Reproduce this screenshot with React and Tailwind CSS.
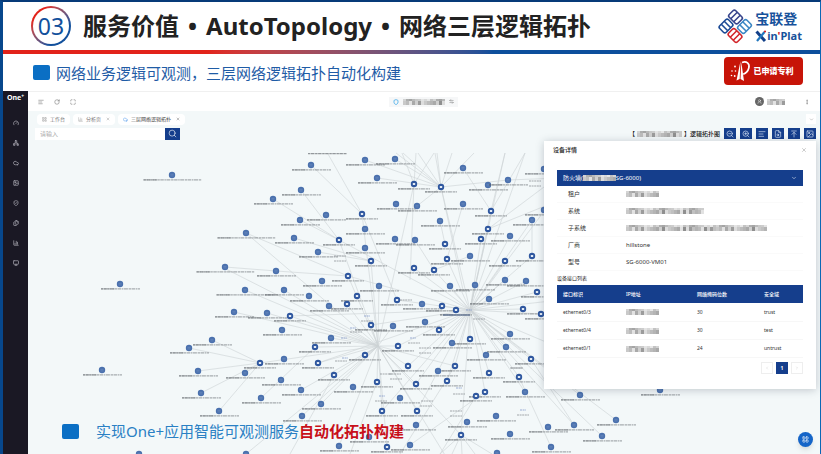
import React from "react";
import {
  AlignLeft, RotateCw, Maximize, Search, ZoomIn, ZoomOut, X, ChevronDown,
  Network, Monitor, ShieldCheck, Files, BarChart3, Gauge,
  LayoutGrid, FileSearch, Image as ImageIcon, ArrowUpToLine, ArrowLeftRight,
  MoreVertical, Shield, UserRound, Cloud, ChevronLeft, ChevronRight,
} from "lucide-react";

const NODES = [
  [311,165],[365,160],[395,159],[377,178],[414,184,1],[441,187,1],[463,168],[488,185],[508,180],[544,169],
  [301,190],[273,199],[396,204],[417,206],[463,204],[491,211,1],[326,215],[362,214,1],[300,220],[440,221],
  [532,220],[544,210],[365,229],[488,229,1],[481,239,1],[510,236],[294,238],[339,240,1],[395,239],[415,240],
  [445,244,1],[318,252],[365,248],[371,261,1],[447,259,1],[470,256],[505,261,1],[532,256,1],[414,268,1],
  [434,270,1],[276,271],[348,276,1],[322,281],[379,286],[450,286],[475,285],[505,280],[526,281],[537,292,1],
  [489,299],[284,290],[309,296],[357,296,1],[329,306],[347,304,1],[397,300,1],[422,304],[442,306,1],[456,310,1],
  [523,309,1],[541,314,1],[290,316,1],[371,325,1],[393,326],[425,322],[439,330,1],[282,330],[331,338],
  [315,347,1],[365,355,1],[398,346,1],[470,339,1],[452,343],[510,334],[506,347],[486,355],[531,359,1],
  [284,359],[318,363,1],[334,375,1],[408,366,1],[455,366,1],[438,371],[489,373,1],[519,377,1],[377,382,1],
  [416,384,1],[447,381,1],[281,380],[353,387],[301,390],[400,398],[485,392,1],[476,396,1],[525,392],
  [321,404],[382,411,1],[417,411,1],[302,416],[496,416],[467,422],[416,425],[461,435,1],[510,434],[548,427],
  [339,446],[387,447,1],[410,445],[497,453],[369,437],[120,284],[245,290],[225,267],[234,312],[267,313],
  [212,340],[189,348],[102,370],[198,371],[245,373],[260,363,1],[201,393],[219,411],[261,398],[139,454],
  [246,454],[172,175],[246,233],[580,395],[660,390],[616,420],[574,425],[602,436],[551,447],
];

const CORE = [470, 310];
const WEST = [378, 346];

const CORE_LINKS = [
  [491,211],[488,229],[481,239],[510,236],[532,220],[532,256],[505,261],[447,259],[434,270],[414,268],[441,187],
  [505,280],[526,281],[537,292],[489,299],[450,286],[475,285],[397,300],[442,306],[523,309],[541,314],[371,325],
  [439,330],[470,339],[510,334],[506,347],[531,359],[408,366],[455,366],[489,373],[519,377],[416,384],[447,381],
  [485,392],[525,392],[580,395],[616,420],[574,425],[602,436],[461,435],[417,411],[382,411],[398,346],[318,363],
  [348,276],[339,240],[525,153],[505,153],[560,190],[560,300],[290,316],[660,390],
];
const WEST_LINKS = [
  [362,214],[339,240],[371,261],[348,276],[347,304],[284,290],[245,290],[267,313],[234,312],
  [290,316],[331,338],[315,347],[365,355],[398,346],[260,363],[318,363],[334,375],[301,390],
  [321,404],[302,416],[339,446],[377,382],[382,411],[387,447],[408,366],[416,384],[417,411],[455,366],
  [246,454],[246,233],[222,267],[371,325],[393,326],[414,184],[379,286],[461,435],[448,460],
];
const LINKS = [
  [441,187,396,153],[441,187,403,153],[441,187,418,153],[441,187,435,153],[441,187,437,153],[441,187,452,153],
  [441,187,474,153],[441,187,395,159],[441,187,365,160],[441,187,377,178],[441,187,417,206],[441,187,508,180],
  [414,184,402,153],[414,184,416,153],[414,184,434,153],[414,184,410,280],[441,187,463,290],
  [463,168,491,211],[508,180,560,178],[488,229,560,175],[491,211,505,153],[491,211,525,153],[488,229,560,200],
  [311,165,362,214],[328,154,362,214],[301,190,339,240],[273,199,339,240],[300,220,339,240],[294,238,371,261],
  [246,233,348,276],[225,267,276,271],[276,271,348,276],[318,252,371,261],[362,214,397,300],[440,221,445,244],
  [463,204,447,259],[415,240,434,270],[532,220,532,256],[470,256,434,270],[189,348,260,363],[212,340,260,363],
  [198,371,260,363],[245,373,260,363],[201,393,260,363],[219,411,260,363],[261,398,315,347],[461,435,440,454],
  [461,435,452,454],[461,435,462,454],[461,435,475,454],[461,435,492,454],[531,359,574,425],[519,377,551,447],
  [476,396,440,454],[485,392,410,445],[455,366,400,454],[334,375,290,454],[377,382,350,454],
];
const MINI = [
  [367,316,1],[367,321],[353,328,1],[356,332],[344,338,1],[345,358,1],[341,361],[413,338,1],[414,343],[425,348],[425,353],
  [386,374],[396,379],[395,374],[382,396,1],[381,401],[427,401],[426,406],[459,388,1],[459,394],[456,411],[456,416],
  [517,368],[516,368],[523,410,1],[523,415],[535,181],[535,186],[340,256],[340,261],[469,310,1],[479,319],[406,300],
];

function Topology() {
  return (
    <svg
      className="absolute inset-0 h-full w-full"
      viewBox="28 111 792 343"
      preserveAspectRatio="xMinYMin slice"
      role="img"
      aria-label="逻辑拓扑图"
    >
      <clipPath id="plot"><rect x="28" y="152" width="792" height="310" /></clipPath>
      <g clipPath="url(#plot)">
        <g stroke="#b4babe" strokeWidth="0.6" opacity="0.6">
          {CORE_LINKS.map(([x, y], i) => <line key={i} x1={CORE[0]} y1={CORE[1]} x2={x} y2={y} />)}
          {WEST_LINKS.map(([x, y], i) => <line key={i} x1={WEST[0]} y1={WEST[1]} x2={x} y2={y} />)}
          {LINKS.map(([a, b, c, d], i) => <line key={i} x1={a} y1={b} x2={c} y2={d} />)}
        </g>
        {NODES.map(([x, y, ring], i) => {
          const far = x < 250 && y < 300 && x !== 120;
          const half = far ? 29 : ring ? 16 : 19.5;
          const lx = ring ? x : x + 0.5;
          return (
            <g key={i}>
              <line x1={lx - half} x2={lx + half} y1={y + 4.8} y2={y + 4.8} stroke="#6b7075" strokeWidth="1.2" strokeDasharray="2.500 .5 3.500 .6 1.500 .5 4 .7" opacity="0.55" />
              <line x1={lx - half} x2={lx - half + 14} y1={y + 4.8} y2={y + 4.8} stroke="#4b5055" strokeWidth="1.3" strokeDasharray="2.300 .5" opacity="0.38" />
              <circle cx={x} cy={y} r="3.2" fill={ring ? "#2f579f" : "#4a70ad"} />
              {ring ? <rect x={x - 1.2} y={y - 1} width="2.4" height="2" rx=".5" fill="#e6edf6" />
                : <path d={`M${x - 1.6} ${y - 0.7}h3.2M${x - 1.6} ${y + 0.9}h3.2`} stroke="#7896c6" strokeWidth=".5" />}
            </g>
          );
        })}
        {MINI.map(([x, y, blue], i) => (
          <line key={i} x1={x - (blue ? 3 : 6)} x2={x + (blue ? 3 : 6)} y1={y} y2={y} stroke={blue ? "#7f95c8" : "#888d92"} strokeWidth="1" strokeDasharray="2 .6" opacity=".75" />
        ))}
        <line x1="443" x2="470" y1="315" y2="315" stroke="#5d7191" strokeWidth="1.3" />
        <line x1="308" x2="347" y1="153.6" y2="153.6" stroke="#6b7075" strokeWidth="1.2" strokeDasharray="2.500 .5 3.500 .6" opacity=".7" />
      </g>
    </svg>
  );
}

// Pixelated strip that hides a private value
const TONES = ["#c9c9c9", "#a9a9a9", "#dddddd", "#b4b4b4", "#8f8f8f", "#c0c0c0", "#e2e2e2", "#9b9b9b", "#bcbcbc", "#cfcfcf"];
function Mask({ cells = 11 }) {
  return (
    <svg width={cells * 3} height="6" className="inline-block shrink-0" aria-hidden="true">
      {Array.from({ length: cells }, (_, i) => (
        <g key={i}>
          <rect x={i * 3} y="0" width="3" height="3" fill={TONES[(i * 7) % 10]} opacity=".8" />
          <rect x={i * 3} y="2" width="3" height="4" fill={TONES[(i * 7 + (i % 3)) % 10]} />
        </g>
      ))}
    </svg>
  );
}

function Ladder({ x, y, angle, color }) {
  return (
    <g transform={`translate(${x} ${y}) rotate(${angle})`} fill="none" stroke={color} strokeWidth="1.6">
      <rect x="-6.2" y="-4.6" width="12.4" height="9.2" rx="2" />
      <path d="M-2.100 -4.600V4.600M2.100 -4.600V4.600" />
    </g>
  );
}

function Brand() {
  return (
    <div className="flex items-center gap-[2px]">
      <svg width="36" height="36" viewBox="0 0 36 36" aria-hidden="true">
        <Ladder x={18.5} y={9} angle={45} color="#38458c" />
        <Ladder x={9} y={18} angle={-45} color="#1d4b96" />
        <Ladder x={27.5} y={18.5} angle={-45} color="#3b86c4" />
        <Ladder x={18} y={27.5} angle={45} color="#d3262b" />
      </svg>
      <div className="flex flex-col text-[#17529b]">
        <span className="w-11 text-[14px] leading-[20px] font-bold whitespace-nowrap">宝联登</span>
        <span className="flex h-[14px] items-center text-[11px] leading-[12px] font-bold whitespace-nowrap">
          <svg width="12" height="12" viewBox="0 0 11 12" aria-hidden="true">
            <path d="M1 1.5L9.5 11" stroke="#123f88" strokeWidth="3" />
            <path d="M9 2L1.5 11" stroke="#2377be" strokeWidth="2.2" />
            <circle cx="9.5" cy="1.500" r="1.1" fill="#d3262b" />
          </svg>
          <span>in<i className="text-[#d3262b] not-italic">'</i>Plat</span>
        </span>
      </div>
    </div>
  );
}

function PatentMark() {
  return (
    <svg width="22" height="22" viewBox="0 0 22 22" aria-hidden="true">
      <path d="M10.500 1L6.500 20.500l3.200-1.500z M11.300 2l-.8 17 3.500 2z" fill="#fff" />
      <path d="M12 2.500C16.500 .8 20 3.500 18.800 8c-.8 3.200-3.300 5.500-5.600 6.300" fill="none" stroke="#fff" strokeWidth="1.7" />
      <circle cx="5" cy="6.500" r=".9" fill="#fff" /><circle cx="2" cy="11" r=".8" fill="#fff" />
      <circle cx="5.500" cy="11" r=".8" fill="#fff" /><circle cx="1.500" cy="15.500" r=".8" fill="#fff" />
      <circle cx="4.700" cy="16" r=".9" fill="#fff" />
    </svg>
  );
}

const MENU = [
  ["仪表", Gauge], ["网络", Network], ["云", Cloud], ["图像", ImageIcon],
  ["安全", ShieldCheck], ["文件", Files], ["统计", BarChart3], ["监控", Monitor],
];
const TOOLS = [
  ["缩小", ZoomOut], ["放大", ZoomIn], ["列表", AlignLeft], ["查询", FileSearch], ["上传", ArrowUpToLine], ["图片", ImageIcon],
];
const PORTS = [["ethernet0/3", "30", "trust"], ["ethernet0/4", "30", "test"], ["ethernet0/1", "24", "untrust"]];

function Detail({ label, children }) {
  return (
    <div className="flex h-[17px] items-center border-b border-[#fafafa] pl-[11px]">
      <dt className="w-[58px]">{label}</dt>
      <dd className="flex items-center">{children}</dd>
    </div>
  );
}

function DevicePanel() {
  return (
    <aside className="absolute top-[30px] right-1 w-[272px] bg-white px-[13px] pb-[15px] text-[6px] leading-[8px] text-[#333] shadow-[0_1px_8px_rgba(40,50,70,0.25)]">
      <div className="-mx-1 flex h-[17px] items-center justify-between">
        <h2 className="font-medium text-[#222]">设备详情</h2>
        <button aria-label="关闭" className="text-[#999]"><X size={6} /></button>
      </div>
      <button className="mt-3 flex h-4 w-full items-center bg-[#153e8c] px-[6px] text-white">
        <span>防火墙(</span>
        <span className="flex bg-white"><Mask cells={11} /></span>
        <span>SG-6000)</span>
        <ChevronDown size={6} className="ml-auto" />
      </button>
      <dl>
        <Detail label="租户"><Mask cells={11} /></Detail>
        <Detail label="系统"><Mask cells={26} /></Detail>
        <Detail label="子系统"><Mask cells={47} /></Detail>
        <Detail label="厂商">hillstone</Detail>
        <Detail label="型号">SG-6000-VM01</Detail>
      </dl>
      <h3 className="flex h-[14px] items-center text-[5px] text-[#222]">设备接口列表</h3>
      <table className="w-full table-fixed text-left text-[5px]">
        <colgroup><col className="w-[63px]" /><col className="w-[71px]" /><col className="w-[67px]" /><col /></colgroup>
        <thead className="bg-[#153e8c] text-white">
          <tr className="h-[18px]">
            {["接口标识", "IP地址", "网络掩码位数", "安全域"].map((h) => <th key={h} scope="col" className="pl-[6px] font-medium">{h}</th>)}
          </tr>
        </thead>
        <tbody>
          {PORTS.map(([name, mask, zone]) => (
            <tr key={name} className="h-[18px] border-b border-[#f7f7f7]">
              <td className="pl-[6px]">{name}</td>
              <td className="pl-[6px]"><Mask cells={11} /></td>
              <td className="pl-[6px]">{mask}</td>
              <td className="pl-[6px]">{zone}</td>
            </tr>
          ))}
        </tbody>
      </table>
      <nav aria-label="分页" className="mt-1 flex justify-end gap-[3px] text-[5px]">
        <button aria-label="上一页" className="flex h-3 w-3 items-center justify-center border border-[#eee] text-[#bbb]"><ChevronLeft size={4} /></button>
        <button className="h-3 w-3 bg-[#153e8c] font-bold text-white">1</button>
        <button aria-label="下一页" className="flex h-3 w-3 items-center justify-center border border-[#eee] text-[#bbb]"><ChevronRight size={4} /></button>
      </nav>
    </aside>
  );
}

function Tab({ icon: Icon, label, active, closable }) {
  return (
    <button className={`flex h-[11px] items-center gap-[3px] rounded-sm bg-white px-[5px] ${active ? "text-[#444]" : "text-[#777]"}`}>
      <Icon size={5} className={active ? "text-[#2f86e8]" : "text-[#999]"} />
      <span>{label}</span>
      {closable && <X size={4} className="ml-[2px]" />}
    </button>
  );
}

export default function App() {
  return (
    <div className="flex h-screen min-h-[454px] flex-col overflow-hidden border-t-2 border-r border-l-[3px] border-t-[#073a78] border-r-[#0b68b5] border-l-[#07478c] bg-white font-['Noto_Sans','Noto_Sans_CJK_SC',sans-serif]">
      <header className="flex h-12 shrink-0 items-center pr-[18px] pl-7">
        <span className="flex h-10 w-10 items-center justify-center rounded-full bg-linear-to-br from-[#e2231a] from-20% to-[#12509c] to-70% p-[2px]">
          <span className="flex h-full w-full items-center justify-center rounded-full bg-white text-[23px] leading-none text-[#12509c]">03</span>
        </span>
        <h1 className="ml-3 flex gap-[9px] text-[24px] leading-[34px] font-bold whitespace-nowrap text-[#222]">
          <span>服务价值</span><span>•</span><span>AutoTopology</span><span>•</span><span>网络三层逻辑拓扑</span>
        </h1>
        <div className="ml-auto"><Brand /></div>
      </header>
      <div className="h-1 shrink-0 bg-linear-to-r from-[#e2231a] from-25% to-[#0d4f9c] to-60%" />
      <section className="flex h-[37px] shrink-0 items-center pr-[17px] pl-[30px]">
        <span className="h-[15px] w-[17px] rounded-[2px] bg-[#0b6fc4]" />
        <h2 className="ml-[6px] text-[15px] leading-5 whitespace-nowrap text-[#1f5ca6]">网络业务逻辑可观测，三层网络逻辑拓扑自动化构建</h2>
        <div className="mt-[-4px] ml-auto flex h-7 w-[79px] items-center justify-center gap-[2px] rounded-[4px] bg-[#c71408] pr-1 text-white">
          <PatentMark />
          <span className="text-[8px] font-black whitespace-nowrap">已申请专利</span>
        </div>
      </section>

      <div className="flex min-h-0 flex-1">
        <aside className="flex w-[25px] shrink-0 flex-col items-center bg-[#1a1824] text-[#a3a2ab]">
          <div className="flex h-[15px] items-center text-[7px] font-bold text-white">One<sup className="text-[5px]">+</sup></div>
          <nav aria-label="主菜单" className="mt-[14px] flex flex-col gap-[14px]">
            {MENU.map(([label, Icon]) => (
              <button key={label} aria-label={label} className="h-[6px] w-[6px]"><Icon size={6} strokeWidth={3} /></button>
            ))}
          </nav>
        </aside>

        <main className="flex min-w-0 flex-1 flex-col">
          <div className="flex h-5 shrink-0 items-center justify-between border-t border-[#f0f0f0] pr-[10px] pl-[10px] text-[#666]">
            <div className="flex gap-[10px]">
              <button aria-label="折叠菜单"><AlignLeft size={6} /></button>
              <button aria-label="刷新"><RotateCw size={6} /></button>
              <button aria-label="全屏"><Maximize size={6} /></button>
            </div>
            <button className="ml-4 flex h-[10px] items-center gap-1 bg-[#f6f7f8] px-1">
              <Shield size={6} strokeWidth={3} className="text-[#35a5e8]" />
              <Mask cells={14} />
              <ArrowLeftRight size={5} />
            </button>
            <div className="flex items-center gap-[3px]">
              <span className="flex h-[9px] w-[9px] items-center justify-center rounded-full bg-[#666] text-white"><UserRound size={5} /></span>
              <Mask cells={6} />
              <button aria-label="更多" className="ml-4"><MoreVertical size={6} /></button>
            </div>
          </div>

          <div className="relative min-h-0 flex-1 overflow-hidden bg-[#f3f8f9]">
            <Topology />
            <div className="relative flex h-4 items-center gap-[3px] pr-1 pl-[9px] text-[5px] leading-[8px]">
              <Tab icon={LayoutGrid} label="工作台" />
              <Tab icon={BarChart3} label="分析页" closable />
              <Tab icon={Cloud} label="三层网络逻辑拓扑" active closable />
              <button aria-label="展开标签" className="ml-auto flex h-[10px] w-[10px] items-center justify-center bg-white text-[#888]"><ChevronDown size={5} /></button>
            </div>
            <div className="relative flex h-[13px] items-center justify-between pr-1 pl-[7px]">
              <form className="flex h-3" onSubmit={(e) => e.preventDefault()}>
                <input aria-label="搜索设备" placeholder="请输入" className="h-3 w-[130px] bg-white px-[5px] text-[6px] placeholder:text-[#aaa]" />
                <button aria-label="搜索" className="flex h-3 w-[15px] items-center justify-center bg-[#153e8c] text-white"><Search size={9} strokeWidth={1.6} /></button>
              </form>
              <div className="flex items-center gap-1">
                <div className="flex items-center gap-[2px] text-[6px] leading-[8px] font-medium text-[#222]">
                  <span>【</span><Mask cells={15} /><span>】逻辑拓扑图</span>
                </div>
                {TOOLS.map(([label, Icon]) => (
                  <button key={label} aria-label={label} className="flex h-[11px] w-3 items-center justify-center bg-[#153e8c] text-[#d6e2f5]"><Icon size={8} strokeWidth={2} /></button>
                ))}
              </div>
            </div>

            <DevicePanel />

            <div className="absolute bottom-[13px] left-[34px] flex items-center text-[15px] leading-5 whitespace-nowrap">
              <span className="mr-[17px] h-[15px] w-[17px] rounded-[2px] bg-[#0b6fc4]" />
              <p className="text-[#2a80c4]">实现One+应用智能可观测服务<strong className="font-bold text-[#c8101a]">自动化拓扑构建</strong></p>
            </div>

            <button aria-label="应用" className="absolute right-[7px] bottom-[7px] flex h-[15px] w-[15px] items-center justify-center rounded-full bg-[#1565c8] text-white shadow-md"><LayoutGrid size={7} /></button>
          </div>
        </main>
      </div>
    </div>
  );
}
